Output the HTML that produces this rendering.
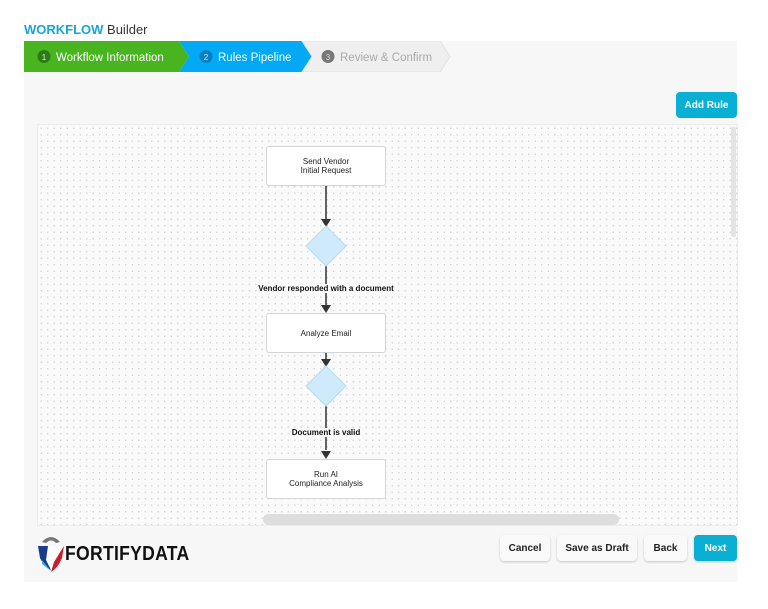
<!DOCTYPE html><html><head><style>
body{margin:0;width:768px;height:609px;background:#fff;font-family:"Liberation Sans",sans-serif;position:relative;overflow:hidden}
.abs{position:absolute}
.title{left:24px;top:22px;font-size:13px;color:#333}
.title b{color:#1aa3d9}
.panel{left:24px;top:41px;width:713px;height:541px;background:#f7f7f7}
.canvas{left:37px;top:124px;width:699px;height:400px;border:1px solid #ececec;background-color:#fafafa;background-image:radial-gradient(circle,#d2d2d2 0.6px,transparent 0.9px);background-size:6.5px 6.5px;overflow:hidden}
.node{position:absolute;left:228px;width:118px;height:38px;background:#fff;border:1px solid #d4d4d4;border-radius:3px;font-size:8px;color:#222;display:flex;align-items:center;justify-content:center;text-align:center;line-height:9px}
.lbl{position:absolute;font-size:8px;font-weight:bold;color:#111;background:#fafafa;transform:translateX(-50%);left:288px;white-space:nowrap}
.btn{position:absolute;top:535px;height:26px;border-radius:4px;background:#f9f9f9;box-shadow:0 1px 2px rgba(0,0,0,.2);font-size:10px;font-weight:bold;color:#222;display:flex;align-items:center;justify-content:center}
</style></head><body>
<div class="abs title"><b>WORKFLOW</b> Builder</div>
<div class="abs panel"></div>
<svg class="abs" style="left:24px;top:41px" width="430" height="31">
<polygon points="0,0 155,0 165,15.5 155,31 0,31" fill="#48b520"/>
<polygon points="155,0 278,0 288,15.5 278,31 155,31 165,15.5" fill="#03a9f4"/>
<polygon points="278,0 416,0 426,15.5 416,31 278,31 288,15.5" fill="#efefef" stroke="#e2e2e2"/>
<circle cx="20" cy="15.5" r="6.5" fill="#2d7a12"/><text x="20" y="19" font-size="8" fill="#cfe" text-anchor="middle" font-family="Liberation Sans">1</text>
<text x="32" y="20" font-size="11.5" fill="#fff" font-family="Liberation Sans">Workflow Information</text>
<circle cx="182" cy="15.5" r="6.5" fill="#0a7fc0"/><text x="182" y="19" font-size="8" fill="#cef" text-anchor="middle" font-family="Liberation Sans">2</text>
<text x="194" y="20" font-size="11.5" fill="#fff" font-family="Liberation Sans">Rules Pipeline</text>
<circle cx="304" cy="15.5" r="6.5" fill="#777"/><text x="304" y="19" font-size="8" fill="#ddd" text-anchor="middle" font-family="Liberation Sans">3</text>
<text x="316" y="20" font-size="11.5" fill="#aaa" font-family="Liberation Sans">Review &amp; Confirm</text>
</svg>
<div class="abs" style="left:676px;top:92px;width:61px;height:26px;background:#0ab0d3;border-radius:4px;color:#fff;font-size:10px;font-weight:bold;display:flex;align-items:center;justify-content:center">Add Rule</div>
<div class="abs canvas">
<svg class="abs" style="left:0;top:0" width="699" height="400">
<g stroke="#333" stroke-width="1.5" fill="#333">
<line x1="288" y1="61" x2="288" y2="95"/><polygon points="283,94 293,94 288,102" stroke="none"/>
<line x1="288" y1="140" x2="288" y2="180"/><polygon points="283,180 293,180 288,188" stroke="none"/>
<line x1="288" y1="228" x2="288" y2="235"/><polygon points="283,234 293,234 288,242" stroke="none"/>
<line x1="288" y1="280" x2="288" y2="325"/><polygon points="283,326 293,326 288,334" stroke="none"/>
</g>
<polygon points="288,101 308,121 288,141 268,121" fill="#cfeafb" stroke="#b5dcf3"/>
<polygon points="288,241 308,261 288,281 268,261" fill="#cfeafb" stroke="#b5dcf3"/>
<rect x="225" y="389" width="356" height="11" rx="5" fill="#dedede"/>
<rect x="693" y="2" width="5" height="110" rx="2" fill="#e4e4e4"/>
</svg>
<div class="node" style="top:21px">Send Vendor<br>Initial Request</div>
<div class="lbl" style="top:159px">Vendor responded with a document</div>
<div class="node" style="top:188px">Analyze Email</div>
<div class="lbl" style="top:303px">Document is valid</div>
<div class="node" style="top:334px">Run AI<br>Compliance Analysis</div>
</div>
<svg class="abs" style="left:36px;top:534px" width="30" height="40">
<path d="M6 8 Q15 -2 24 8 L20 9 Q15 4 10 9 Z" fill="#777"/>
<path d="M2 12 L28 12 L26 24 Q22 34 15 38 Q8 34 4 24 Z" fill="#fff"/>
<path d="M2 12 L12 12 L10 26 L15 36 Q8 33 4 24 Z" fill="#1a3a8c"/>
<path d="M6 26 L15 37 L6 30 Z" fill="#3aa9e0"/>
<path d="M28 12 L26 24 Q22 34 15 38 L18 28 Z" fill="#c8202a"/>
</svg>
<div class="abs" style="left:65px;top:543px;font-size:20px;font-weight:bold;color:#111;letter-spacing:0.3px;transform:scaleX(0.88);transform-origin:left">FORTIFYDATA</div>
<div class="btn" style="left:500px;width:50px">Cancel</div>
<div class="btn" style="left:557px;width:80px">Save as Draft</div>
<div class="btn" style="left:644px;width:43px">Back</div>
<div class="btn" style="left:694px;width:43px;background:#0ab0d3;color:#fff">Next</div>
</body></html>
